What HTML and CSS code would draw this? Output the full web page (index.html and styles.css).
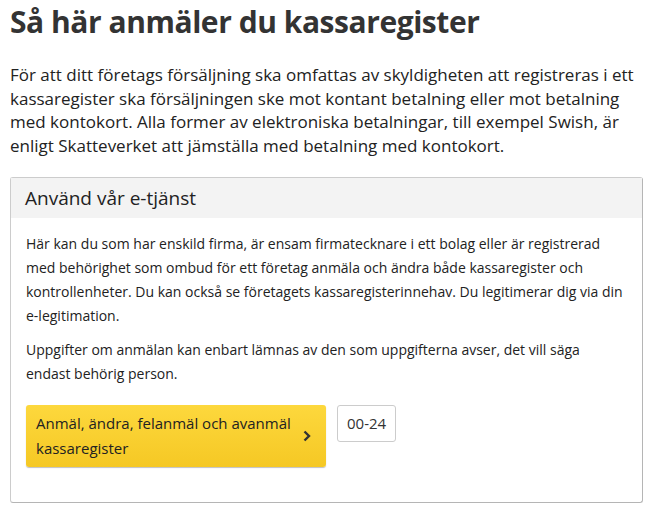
FILE: index.html
```html
<!DOCTYPE html>
<html lang="sv">
  <head>
    <meta charset="UTF-8" />
    <meta name="viewport" content="width=device-width, initial-scale=1.0" />
    <title>Så här anmäler du kassaregister</title>
    <link rel="stylesheet" href="styles.css">
  </head>
  <body>
    <h1>Så här anmäler du kassaregister</h1>

    <p class="lead">
      För att ditt företags försäljning ska omfattas av skyldigheten att registreras i ett
      kassaregister ska försäljningen ske mot kontant betalning eller mot betalning
      med kontokort. Alla former av elektroniska betalningar, till exempel Swish, är
      enligt Skatteverket att jämställa med betalning med kontokort.
    </p>

    <!-- E-tjänst box -->
    <div class="panel">
      <div class="panel-head">
        <h2>Använd vår e-tjänst</h2>
      </div>
      <div class="panel-body">
        <p>
          Här kan du som har enskild firma, är ensam firmatecknare i ett bolag eller är registrerad
          med behörighet som ombud för ett företag anmäla och ändra både kassaregister och
          kontrollenheter. Du kan också se företagets kassaregisterinnehav. Du legitimerar dig via din
          e-legitimation.
        </p>
        <p>
          Uppgifter om anmälan kan enbart lämnas av den som uppgifterna avser, det vill säga
          endast behörig person.
        </p>
        <div class="actions">
          <a class="service-btn" href="#">
            <span class="label">Anmäl, ändra, felanmäl och avanmäl kassaregister</span>
            <svg class="chevron" width="8" height="12" viewBox="0 0 8 12">
              <path d="M1.5 1.5 L6 6 L1.5 10.5" fill="none" stroke="#333" stroke-width="2.4" />
            </svg>
          </a>
          <span class="hours">00-24</span>
        </div>
      </div>
    </div>
  </body>
</html>
```

FILE: styles.css
```css
body {
  font-family: "Open Sans", Arial, sans-serif;
  color: #222;
  margin: 0;
  padding: 0 15px 0 10px;
  background: white;
}
h1 {
  font-size: 30px;
  font-weight: 700;
  color: #333;
  margin: 3px 0 0;
  line-height: 38px;
  letter-spacing: -0.45px;
}
.lead {
  font-size: 17px;
  line-height: 23.5px;
  margin: 22px 0 20px;
}
.panel {
  border: 1px solid #ccc;
  border-right-color: #b5b5b5;
  border-bottom-color: #b5b5b5;
  border-radius: 3px;
  width: 631px;
}
.panel-head {
  background-color: #f3f3f3;
  padding: 5px 14px;
  height: 30px;
}
.panel-head h2 {
  font-size: 19px;
  font-weight: 400;
  color: #222;
  margin: 0;
  line-height: 30px;
}
.panel-body {
  padding: 14px 15px 35px;
}
.panel-body p {
  font-size: 14px;
  line-height: 24px;
  margin: 0 0 10px;
}
.actions {
  display: flex;
  align-items: flex-start;
  gap: 11px;
  margin-top: 19px;
}
.service-btn {
  display: flex;
  align-items: center;
  gap: 6px;
  width: 300px;
  box-sizing: border-box;
  padding: 6px 15px 6px 10px;
  background: linear-gradient(#fdd83d, #f5c824);
  border-radius: 3px;
  box-shadow: 0 1px 1px rgba(0, 0, 0, 0.25);
  color: #222;
  text-decoration: none;
  font-size: 15px;
  line-height: 25px;
}
.label {
  flex: 1;
}
.chevron {
  flex: none;
}
.hours {
  border: 1px solid #ccc;
  border-radius: 3px;
  padding: 6px 9px;
  font-size: 15px;
  line-height: 23px;
  color: #333;
}
```
